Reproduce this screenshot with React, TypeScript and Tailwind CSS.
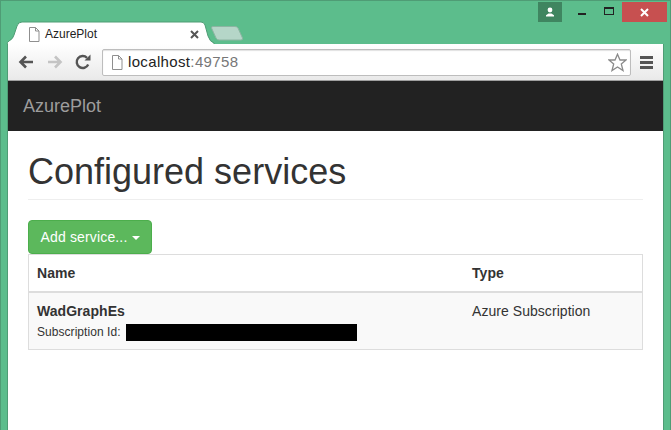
import React from 'react';

const PageIcon = ({ className }: { className?: string }) => (
  <svg className={className} width="12" height="15" viewBox="0 0 12 15" fill="none">
    <path d="M1.5 .5H7.5L11 4V14.5H1.5Z" fill="#fff" stroke="#8f8f8f" />
    <path d="M7.5 .5V4H11" stroke="#8f8f8f" />
  </svg>
);

const TitleBar = () => (
  <div className="relative h-[43px] shrink-0">
    {/* window buttons */}
    <div className="flex justify-end h-[21px] pt-px pr-[3px]">
      <div className="w-[24px] h-[20px] bg-[#3f8560] flex items-center justify-center">
        <svg width="10" height="10" viewBox="0 0 10 10" fill="#fff">
          <circle cx="5" cy="3" r="2.4" />
          <path d="M1 9.5V8.2L3.5 6.6H6.5L9 8.2V9.5Z" />
        </svg>
      </div>
      <div className="w-[60px] h-[20px] flex">
        <div className="w-[30px] flex justify-end pt-[11px] pr-[6px]">
          <div className="w-[8px] h-[2px] bg-[#222]" />
        </div>
        <div className="w-[30px] flex justify-end pt-[5px] pr-[8px]">
          <div className="w-[10px] h-[8px] border border-t-2 border-[#222]" />
        </div>
      </div>
      <div className="w-[45px] h-[20px] bg-[#c75050] flex items-center justify-center">
        <svg width="9" height="9" viewBox="0 0 9 9" stroke="#fff" strokeWidth="2">
          <path d="M1 1L8 8M8 1L1 8" />
        </svg>
      </div>
    </div>

    {/* tab shape */}
    <svg className="absolute left-[5px] top-[20px]" width="240" height="23" viewBox="0 0 240 23">
      <path d="M207 5.5H229Q231 5.5 232 7L236.5 17Q237 19 235 19H213Q211 19 210 17L205.5 7Q205 5.5 207 5.5Z" fill="#b5d6c8" stroke="#8cb5a2" strokeWidth="1" />
      <path d="M1 25V24Q1 21 3 20Q7 18 8 14L11 5Q12 1 16 1H195Q198 1 199 4L202 15Q204 21 208 22V25Z" fill="#fff" stroke="#4f9c75" strokeWidth="1" />
    </svg>
    <div className="absolute left-[27px] top-[25px] flex items-center h-[16px] w-[171px]">
      <PageIcon />
      <span className="ml-[5px] text-[12px] text-[#222] flex-1">AzurePlot</span>
      <svg width="9" height="9" viewBox="0 0 9 9" stroke="#555" strokeWidth="2">
        <path d="M1 1L8 8M8 1L1 8" />
      </svg>
    </div>
  </div>
);

const Toolbar = () => (
  <div className="h-[37px] shrink-0 flex items-center bg-gradient-to-b from-white to-[#e9e9e9] border-b border-[#a0a0a0] rounded-tr-[2px]">
    <svg className="ml-[10px]" width="16" height="14" viewBox="0 0 16 14" fill="none" stroke="#555" strokeWidth="2.6">
      <path d="M15 7H3M8 1.5L2.5 7L8 12.5" />
    </svg>
    <svg className="ml-[13px]" width="16" height="14" viewBox="0 0 16 14" fill="none" stroke="#c4c4c4" strokeWidth="2.6">
      <path d="M1 7H13M8 1.5L13.5 7L8 12.5" />
    </svg>
    <svg className="ml-[12px]" width="16" height="16" viewBox="0 0 16 16" fill="none">
      <path d="M13.2 10.5A6 6 0 1 1 12 3.8" stroke="#555" strokeWidth="2.4" />
      <path d="M9.5 6.5H15.5V0.5Z" fill="#555" />
    </svg>
    <div className="ml-[11px] w-[529px] h-[27px] bg-white border border-[#bdbdbd] rounded-[2px] flex items-center pl-[8px] shadow-[inset_0_1px_1px_rgba(0,0,0,0.12)]">
      <PageIcon />
      <span className="ml-[5px] pt-px text-[15px] text-[#222] tracking-[0.35px]">
        localhost<span className="text-[#777]">:49758</span>
      </span>
      <svg className="ml-auto mr-[3px]" width="19" height="19" viewBox="0 0 19 19" fill="#fff" stroke="#8a8a8a" strokeWidth="1.3">
        <path d="M9.5 1.2L12 7H18L13.3 11L15 17.5L9.5 14L4 17.5L5.7 11L1 7H7Z" />
      </svg>
    </div>
    <div className="ml-[9px] w-[13px] flex flex-col gap-[2px]">
      <div className="h-[3px] bg-[#555]" />
      <div className="h-[3px] bg-[#555]" />
      <div className="h-[3px] bg-[#555]" />
    </div>
  </div>
);

const App = () => {
  return (
    <div
      className="w-[671px] h-[430px] overflow-hidden flex flex-col bg-[#5cbd8c] border border-b-0 border-[#4f9c75]"
      style={{ fontFamily: '"Liberation Sans", Arial, sans-serif' }}
    >
      <TitleBar />
      <div className="flex-1 min-h-0 mx-[6px] flex flex-col bg-white border-x border-[#4f9c75]">
        <Toolbar />
        <div className="h-[50px] shrink-0 bg-[#222] flex items-center pl-[15px]">
          <span className="text-[18px] text-[#9d9d9d]">AzurePlot</span>
        </div>
        <div className="flex-1 px-[20px]">
          <h1 className="mt-[21px] pb-[7px] text-[36px] leading-[40px] text-[#333] border-b border-[#eee]">
            Configured services
          </h1>
          <button className="mt-[20px] block h-[34px] w-[124px] pl-[1px] rounded-[4px] bg-[#5cb85c] border border-[#4cae4c] text-white text-[14px] tracking-[0.15px]">
            Add service...
            <span className="inline-block ml-[5px] align-middle border-x-[4px] border-x-transparent border-t-[4px] border-t-white" />
          </button>
          <div className="w-[615px] border border-[#ddd] text-[14px] text-[#333] tracking-[0.05px]">
            <div className="flex h-[38px] border-b-2 border-[#ddd] items-center font-bold">
              <div className="w-[443px] pl-[8px]">Name</div>
              <div>Type</div>
            </div>
            <div className="flex h-[56px] bg-[#f9f9f9]">
              <div className="w-[443px] pl-[8px] pt-[8px]">
                <div className="font-bold leading-[20px]">WadGraphEs</div>
                <div className="mt-[2px] flex items-center text-[12px] leading-[18px]">
                  Subscription Id:
                  <div className="ml-[5px] w-[231px] h-[17px] bg-black" />
                </div>
              </div>
              <div className="pt-[8px] leading-[20px]">Azure Subscription</div>
            </div>
          </div>
        </div>
      </div>
    </div>
  );
};

export default App;
